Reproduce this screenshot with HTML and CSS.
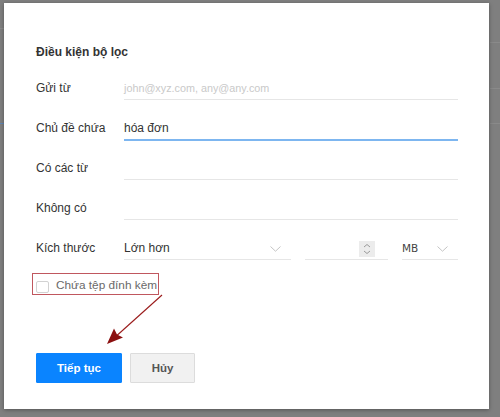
FILE: index.html
```html
<!DOCTYPE html>
<html lang="vi">
<head>
<meta charset="utf-8">
<title>Điều kiện bộ lọc</title>
<link rel="stylesheet" href="styles.css">
</head>
<body>
<div class="dialog">
  <h2 class="title">Điều kiện bộ lọc</h2>
  <div class="form">
    <div class="row">
      <label class="label">Gửi từ</label>
      <div class="field"><span class="placeholder">john@xyz.com, any@any.com</span></div>
    </div>
    <div class="row">
      <label class="label">Chủ đề chứa</label>
      <div class="field field-active">hóa đơn</div>
    </div>
    <div class="row">
      <label class="label">Có các từ</label>
      <div class="field"></div>
    </div>
    <div class="row">
      <label class="label">Không có</label>
      <div class="field"></div>
    </div>
    <div class="row">
      <label class="label">Kích thước</label>
      <div class="size">
        <div class="field select compare">
          <span>Lớn hơn</span>
          <svg class="chev" width="11" height="6" viewBox="0 0 11 6"><path d="M0.5 0.5 L5.5 5.2 L10.5 0.5" fill="none" stroke="#c4c4c4" stroke-width="1"/></svg>
        </div>
        <div class="field number">
          <span class="spin">
            <svg width="16" height="16" viewBox="0 0 16 16"><path d="M5 6 L8 3.5 L11 6" fill="none" stroke="#9a9a9a" stroke-width="1"/><path d="M5 10 L8 12.5 L11 10" fill="none" stroke="#9a9a9a" stroke-width="1"/></svg>
          </span>
        </div>
        <div class="field select unit">
          <span class="mb">MB</span>
          <svg class="chev" width="11" height="6" viewBox="0 0 11 6"><path d="M0.5 0.5 L5.5 5.2 L10.5 0.5" fill="none" stroke="#c4c4c4" stroke-width="1"/></svg>
        </div>
      </div>
    </div>
  </div>
  <div class="attach">
    <span class="check"></span>
    <span class="attach-label">Chứa tệp đính kèm</span>
  </div>
  <div class="actions">
    <button class="btn primary">Tiếp tục</button>
    <button class="btn secondary">Hủy</button>
  </div>
  <svg class="arrow" width="485" height="406" viewBox="0 0 485 406">
    <line x1="158" y1="292" x2="109" y2="336" stroke="#9b1c1c" stroke-width="1.1"/>
    <polygon points="103,341 110,325.5 113,331.5 119,334.5" fill="#8b1010"/>
  </svg>
</div>
</body>
</html>
```

FILE: styles.css
```css
* { box-sizing: border-box; }

html, body {
  margin: 0;
  height: 417px;
  overflow: hidden;
}

body {
  background:
    linear-gradient(#8b8b8b, #8b8b8b) 0 28px / 4px 1px no-repeat,
    linear-gradient(#5f86b5, #5f86b5) 0 123px / 4px 1px no-repeat,
    linear-gradient(#8a8a8a, #8a8a8a) 490px 42px / 10px 1px no-repeat,
    linear-gradient(#8a8a8a, #8a8a8a) 490px 88px / 10px 1px no-repeat,
    linear-gradient(#8a8a8a, #8a8a8a) 490px 123px / 10px 1px no-repeat,
    #7f7f7f;
  font-family: "Liberation Sans", Arial, sans-serif;
  padding: 3px 0 0 4px;
}

.dialog {
  position: relative;
  width: 485px;
  height: 406px;
  background: #fff;
  box-shadow: 0 1px 4px rgba(0, 0, 0, 0.35);
  padding: 0 31px 0 32px;
}

.title {
  margin: 0;
  padding-top: 42px;
  height: 57px;
  font-size: 12px;
  line-height: 15px;
  font-weight: bold;
  color: #333;
}

.row {
  display: grid;
  grid-template-columns: 88px 1fr;
  align-items: end;
  height: 40px;
}

.label {
  font-size: 12px;
  line-height: 18px;
  padding-bottom: 3px;
  color: #333;
}

.field {
  height: 21px;
  font-size: 12px;
  line-height: 18px;
  padding-bottom: 2px;
  border-bottom: 1px solid #e6e6e6;
  color: #333;
}

.field-active {
  height: 22px;
  padding-bottom: 2px;
  border-bottom: 2px solid #7db6f0;
  margin-bottom: -1px;
}

.placeholder {
  color: #c9c9c9;
  font-size: 10.8px;
}

.size {
  display: flex;
  gap: 14px;
}

.select {
  display: flex;
  align-items: center;
  justify-content: space-between;
}

.compare {
  width: 167px;
  padding-right: 10px;
}

.number {
  width: 83px;
  display: flex;
  justify-content: flex-end;
  align-items: flex-end;
  padding-right: 13px;
}

.spin {
  display: block;
  width: 16px;
  height: 16px;
  background: #ececec;
}

.spin svg { display: block; }

.unit {
  width: 56px;
  padding-right: 10px;
}

.mb {
  font-family: "DejaVu Sans", sans-serif;
  font-size: 10.5px;
  color: #444;
}

.chev {
  display: block;
  margin-top: 1px;
}

.attach {
  display: flex;
  align-items: flex-end;
  gap: 7px;
  width: 127px;
  height: 22px;
  margin: 13px 0 0 -4px;
  padding: 0 2px 1px 3px;
  border: 1px solid #c0575e;
}

.check {
  display: block;
  flex: 0 0 13px;
  width: 13px;
  height: 12px;
  border: 1px solid #d2d2d2;
  border-radius: 2px;
  background: #fff;
}

.attach-label {
  font-size: 11.8px;
  line-height: 15px;
  color: #6a6a6a;
  white-space: nowrap;
}

.actions {
  display: flex;
  gap: 8px;
  margin-top: 58px;
}

.btn {
  height: 30px;
  font-family: "Liberation Sans", Arial, sans-serif;
  font-size: 11.5px;
  font-weight: bold;
  border-radius: 1px;
  padding: 0;
}

.primary {
  width: 86px;
  background: #0a84ff;
  border: 1px solid #0a84ff;
  color: #fff;
}

.secondary {
  width: 65px;
  background: #f1f1f1;
  border: 1px solid #dcdcdc;
  color: #555;
}

.arrow {
  position: absolute;
  left: 0;
  top: 0;
  pointer-events: none;
}
```
